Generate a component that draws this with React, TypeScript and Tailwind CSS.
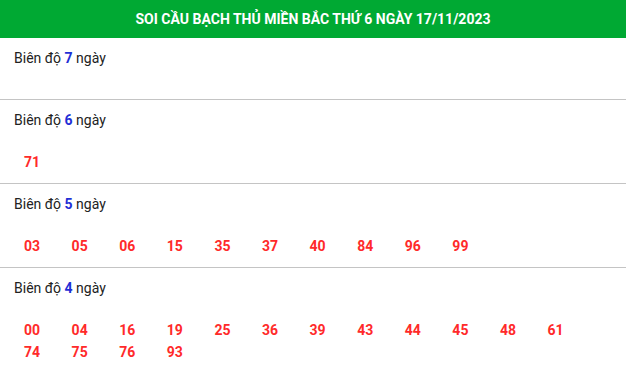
const groups: { days: number; nums: string[] }[] = [
  { days: 7, nums: [] },
  { days: 6, nums: ["71"] },
  { days: 5, nums: ["03", "05", "06", "15", "35", "37", "40", "84", "96", "99"] },
  {
    days: 4,
    nums: ["00", "04", "16", "19", "25", "36", "39", "43", "44", "45", "48", "61", "74", "75", "76", "93"],
  },
];

export default function App() {
  return (
    <div className="w-[626px] bg-white font-['Roboto',sans-serif] text-[14px] text-[#222]">
      <div className="h-[38px] bg-[#00a933] flex items-center justify-center text-white font-bold text-[14px]">
        SOI CẦU BẠCH THỦ MIỀN BẮC THỨ 6 NGÀY 17/11/2023
      </div>
      {groups.map((g) => (
        <div key={g.days} className="px-[14px] pt-[10px] pb-[10px] border-b border-[#c4c4c4]">
          <div className="h-[20px] leading-[20px]">
            Biên độ <b className="text-[#1f2fd6]">{g.days}</b> ngày
          </div>
          <div className="mt-[21px] pl-[10px] flex flex-wrap">
            {g.nums.map((n) => (
              <span key={n} className="w-[47.6px] leading-[22px] font-bold text-[#ff2a2a]">
                {n}
              </span>
            ))}
          </div>
        </div>
      ))}
    </div>
  );
}
